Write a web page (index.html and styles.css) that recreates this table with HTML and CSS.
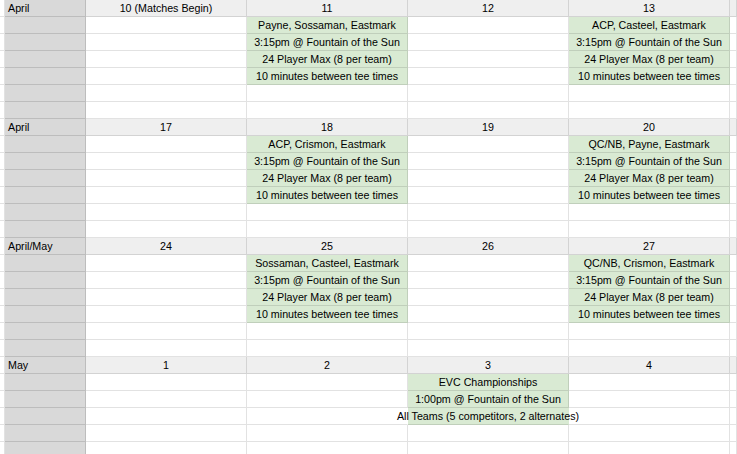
FILE: index.html
```html
<!DOCTYPE html>
<html>
<head>
<meta charset="utf-8">
<link rel="stylesheet" href="styles.css">
</head>
<body>
<div class="sheet">
  <!-- Block 1 -->
  <div class="c"></div><div class="c m">April</div><div class="c h">10 (Matches Begin)</div><div class="c h">11</div><div class="c h">12</div><div class="c h">13</div><div class="c h"></div>
  <div class="c"></div><div class="c m"></div><div class="c"></div><div class="c g">Payne, Sossaman, Eastmark</div><div class="c"></div><div class="c g">ACP, Casteel, Eastmark</div><div class="c"></div>
  <div class="c"></div><div class="c m"></div><div class="c"></div><div class="c g">3:15pm @ Fountain of the Sun</div><div class="c"></div><div class="c g">3:15pm @ Fountain of the Sun</div><div class="c"></div>
  <div class="c"></div><div class="c m"></div><div class="c"></div><div class="c g">24 Player Max (8 per team)</div><div class="c"></div><div class="c g">24 Player Max (8 per team)</div><div class="c"></div>
  <div class="c"></div><div class="c m"></div><div class="c"></div><div class="c g">10 minutes between tee times</div><div class="c"></div><div class="c g">10 minutes between tee times</div><div class="c"></div>
  <div class="c"></div><div class="c m"></div><div class="c"></div><div class="c"></div><div class="c"></div><div class="c"></div><div class="c"></div>
  <div class="c"></div><div class="c m"></div><div class="c"></div><div class="c"></div><div class="c"></div><div class="c"></div><div class="c"></div>
  <!-- Block 2 -->
  <div class="c"></div><div class="c m">April</div><div class="c h">17</div><div class="c h">18</div><div class="c h">19</div><div class="c h">20</div><div class="c h"></div>
  <div class="c"></div><div class="c m"></div><div class="c"></div><div class="c g">ACP, Crismon, Eastmark</div><div class="c"></div><div class="c g">QC/NB, Payne, Eastmark</div><div class="c"></div>
  <div class="c"></div><div class="c m"></div><div class="c"></div><div class="c g">3:15pm @ Fountain of the Sun</div><div class="c"></div><div class="c g">3:15pm @ Fountain of the Sun</div><div class="c"></div>
  <div class="c"></div><div class="c m"></div><div class="c"></div><div class="c g">24 Player Max (8 per team)</div><div class="c"></div><div class="c g">24 Player Max (8 per team)</div><div class="c"></div>
  <div class="c"></div><div class="c m"></div><div class="c"></div><div class="c g">10 minutes between tee times</div><div class="c"></div><div class="c g">10 minutes between tee times</div><div class="c"></div>
  <div class="c"></div><div class="c m"></div><div class="c"></div><div class="c"></div><div class="c"></div><div class="c"></div><div class="c"></div>
  <div class="c"></div><div class="c m"></div><div class="c"></div><div class="c"></div><div class="c"></div><div class="c"></div><div class="c"></div>
  <!-- Block 3 -->
  <div class="c"></div><div class="c m">April/May</div><div class="c h">24</div><div class="c h">25</div><div class="c h">26</div><div class="c h">27</div><div class="c h"></div>
  <div class="c"></div><div class="c m"></div><div class="c"></div><div class="c g">Sossaman, Casteel, Eastmark</div><div class="c"></div><div class="c g">QC/NB, Crismon, Eastmark</div><div class="c"></div>
  <div class="c"></div><div class="c m"></div><div class="c"></div><div class="c g">3:15pm @ Fountain of the Sun</div><div class="c"></div><div class="c g">3:15pm @ Fountain of the Sun</div><div class="c"></div>
  <div class="c"></div><div class="c m"></div><div class="c"></div><div class="c g">24 Player Max (8 per team)</div><div class="c"></div><div class="c g">24 Player Max (8 per team)</div><div class="c"></div>
  <div class="c"></div><div class="c m"></div><div class="c"></div><div class="c g">10 minutes between tee times</div><div class="c"></div><div class="c g">10 minutes between tee times</div><div class="c"></div>
  <div class="c"></div><div class="c m"></div><div class="c"></div><div class="c"></div><div class="c"></div><div class="c"></div><div class="c"></div>
  <div class="c"></div><div class="c m"></div><div class="c"></div><div class="c"></div><div class="c"></div><div class="c"></div><div class="c"></div>
  <!-- Block 4 -->
  <div class="c"></div><div class="c m">May</div><div class="c h">1</div><div class="c h">2</div><div class="c h">3</div><div class="c h">4</div><div class="c h"></div>
  <div class="c"></div><div class="c m"></div><div class="c"></div><div class="c"></div><div class="c g">EVC Championships</div><div class="c"></div><div class="c"></div>
  <div class="c"></div><div class="c m"></div><div class="c"></div><div class="c"></div><div class="c g">1:00pm @ Fountain of the Sun</div><div class="c"></div><div class="c"></div>
  <div class="c"></div><div class="c m"></div><div class="c"></div><div class="c nr"></div><div class="c g nr ov"><span>All Teams (5 competitors, 2 alternates)</span></div><div class="c"></div><div class="c"></div>
  <div class="c"></div><div class="c m"></div><div class="c"></div><div class="c"></div><div class="c"></div><div class="c"></div><div class="c"></div>
  <div class="c"></div><div class="c m"></div><div class="c"></div><div class="c"></div><div class="c"></div><div class="c"></div><div class="c"></div>
</div>
</body>
</html>
```

FILE: styles.css
```css
html, body {
  margin: 0;
  padding: 0;
  background: #ffffff;
  overflow: hidden;
}

.sheet {
  display: grid;
  grid-template-columns: 5px 81px 161px 161px 161px 161px 1fr;
  grid-auto-rows: 17px;
  font-family: "Liberation Sans", Arial, sans-serif;
  font-size: 10.7px;
  color: #000;
}

.c {
  box-sizing: border-box;
  border-right: 1px solid rgba(0, 0, 0, 0.115);
  border-bottom: 1px solid rgba(0, 0, 0, 0.115);
  line-height: 16px;
  text-align: center;
  white-space: nowrap;
  overflow: hidden;
}

.m {
  background: #d9d9d9;
  text-align: left;
  padding-left: 3px;
  border-right-color: rgba(0, 0, 0, 0.13);
  border-bottom-color: rgba(0, 0, 0, 0.13);
}

.h {
  background: #efefef;
}

.g {
  background: #d9ead3;
}

.nr {
  border-right-color: transparent;
}

.ov {
  overflow: visible;
  display: flex;
  justify-content: center;
}

.ov span {
  position: relative;
  z-index: 1;
}
```
